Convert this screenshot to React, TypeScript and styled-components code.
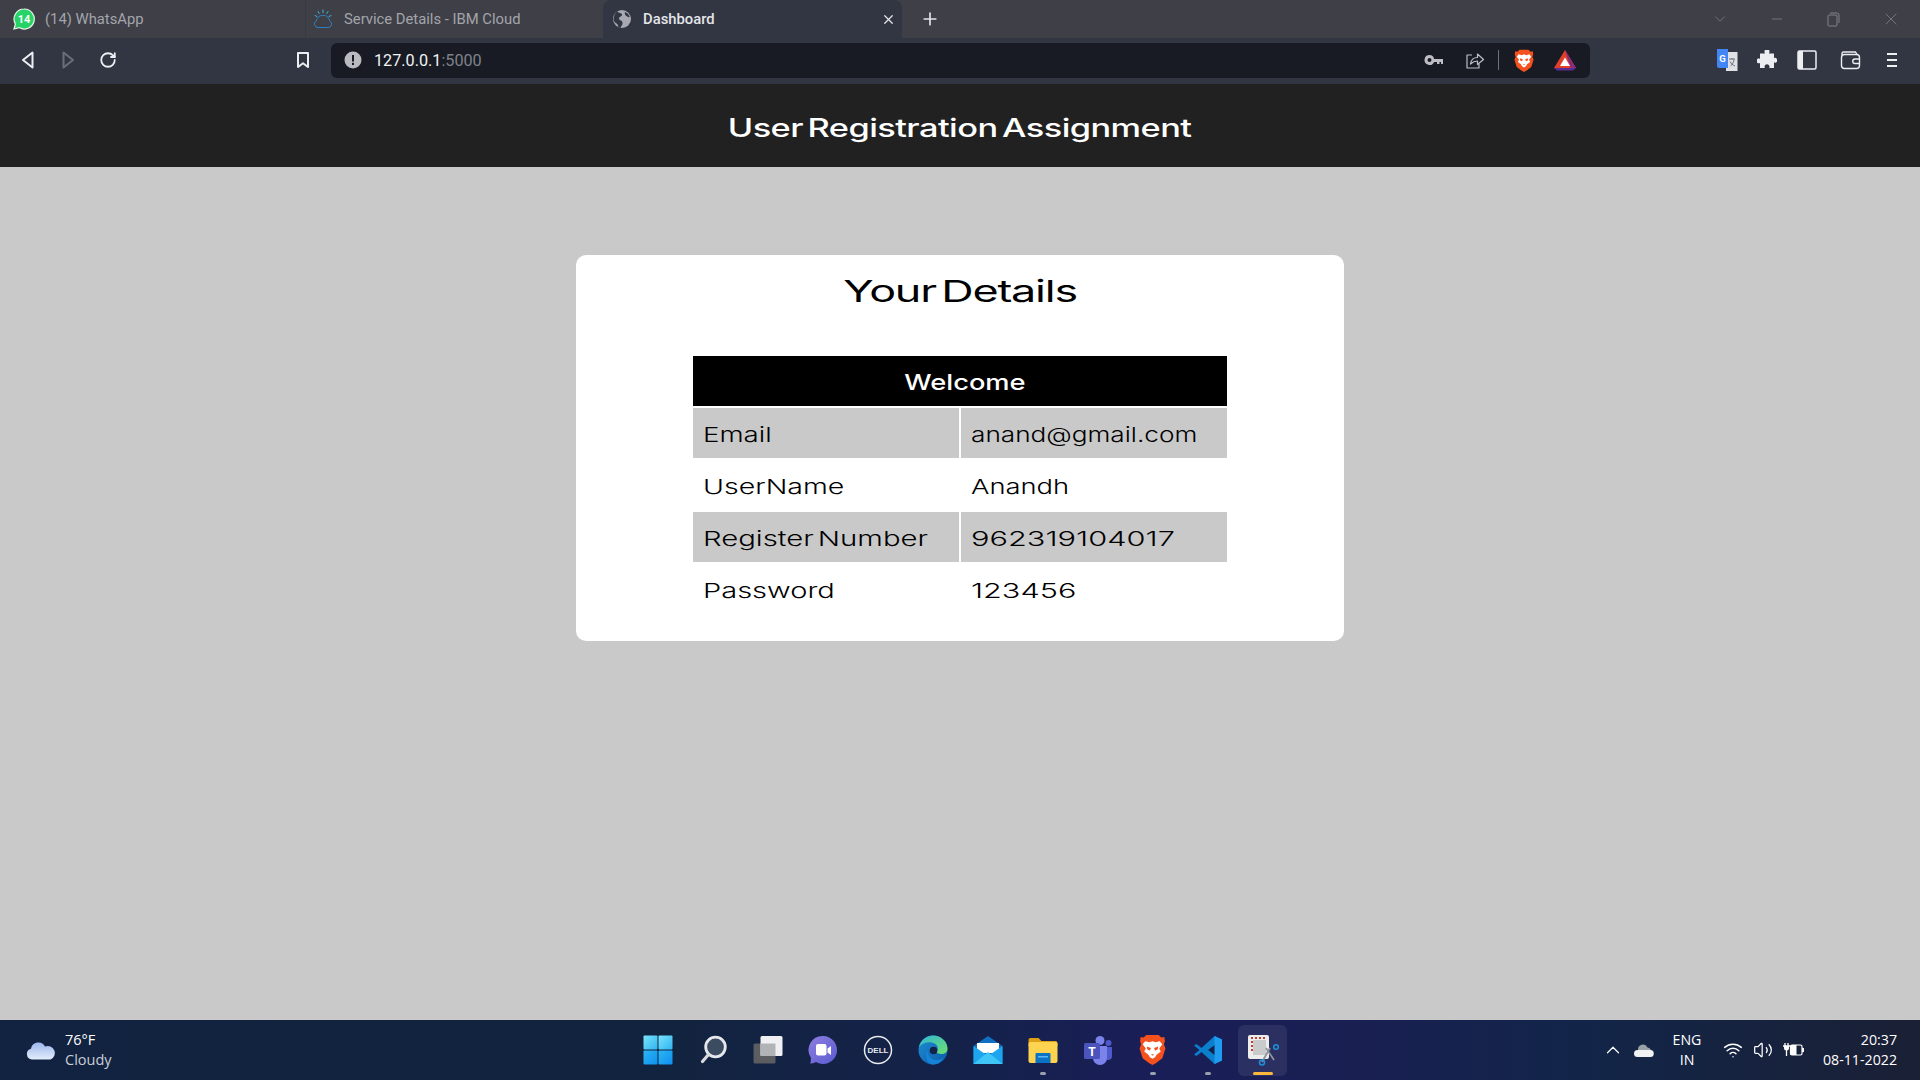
import React from "react"
import styled, { createGlobalStyle } from "styled-components"
import { ChevronDown, ChevronUp, Minus, Plus, RotateCw, Volume2, Wifi, X } from "lucide-react"

const GlobalStyle = createGlobalStyle`
  html, body {
    margin: 0;
    height: 100%;
    overflow: hidden;
  }
  body {
    font-family: "Open Sans", "Liberation Sans", sans-serif;
  }
  * {
    box-sizing: border-box;
  }
`

const Screen = styled.div`
  display: flex;
  flex-direction: column;
  width: 1920px;
  height: 1080px;
  background: #c9c9c9;
`

const TabStrip = styled.div`
  display: flex;
  align-items: stretch;
  height: 38px;
  flex: none;
  background: #3e3f47;
`

const Tab = styled.div<{ $active?: boolean; $pad: number; $width: number; $divider?: boolean }>`
  display: flex;
  align-items: center;
  gap: 10px;
  width: ${p => p.$width}px;
  margin-left: ${p => (p.$divider ? 4 : 0)}px;
  padding: 0 6px 0 ${p => p.$pad}px;
  border-left: ${p => (p.$divider ? "1px solid #383941" : "none")};
  border-radius: ${p => (p.$active ? "8px 8px 0 0" : "0")};
  background: ${p => (p.$active ? "#323643" : "transparent")};
  color: ${p => (p.$active ? "#e4e5e9" : "#a3a5ab")};
  font-family: Roboto, "Liberation Sans", sans-serif;
  font-size: 14.8px;
  font-weight: ${p => (p.$active ? 500 : 400)};
`

const TabTitle = styled.span`
  flex: 1;
  white-space: nowrap;
`

const NewTab = styled.div`
  display: flex;
  align-items: center;
  justify-content: center;
  width: 56px;
  color: #e4e5e9;
`

const WindowControls = styled.div`
  display: flex;
  align-items: center;
  margin-left: auto;
  padding-right: 1px;
  color: #80828a;
`

const WindowButton = styled.div`
  display: flex;
  align-items: center;
  justify-content: center;
  width: 57px;
  height: 38px;
`

const Toolbar = styled.div`
  display: flex;
  align-items: center;
  height: 46px;
  flex: none;
  padding: 0 8px 2px;
  background: #323643;
`

const ToolButton = styled.div<{ $dim?: boolean; $after?: number }>`
  display: flex;
  align-items: center;
  justify-content: center;
  width: 40px;
  height: 36px;
  flex: none;
  margin-right: ${p => p.$after ?? 0}px;
  color: ${p => (p.$dim ? "#6b6e79" : "#eceef2")};
`

const BookmarkButton = styled(ToolButton)`
  margin-left: 155px;
`

const AddressBar = styled.div`
  display: flex;
  align-items: center;
  width: 1259px;
  height: 35px;
  margin-left: 8px;
  padding: 0 5px 0 13px;
  border-radius: 6px;
  background: #181b23;
  font-family: Roboto, "Liberation Sans", sans-serif;
  font-size: 16.2px;
  flex: none;
`

const Host = styled.span`
  margin-left: 12px;
  color: #f2f3f5;
`

const Port = styled.span`
  color: #7f828b;
`

const AddressIcons = styled.div`
  display: flex;
  align-items: center;
  margin-left: auto;
`

const AddressIcon = styled.div`
  display: flex;
  align-items: center;
  justify-content: center;
  width: 41px;
  height: 35px;
  color: #bcbec4;
`

const Separator = styled.div`
  width: 1px;
  height: 20px;
  margin: 0 4px 0 3px;
  background: #6f727a;
`

const ToolRight = styled.div`
  display: flex;
  align-items: center;
  margin-left: auto;
`

const WideButton = styled(ToolButton)`
  width: 41px;
`

const PageHeader = styled.header`
  display: flex;
  align-items: center;
  justify-content: center;
  height: 83px;
  flex: none;
  padding-top: 5px;
  background: #212121;
  color: #fff;
`

const Stretched = styled.span<{ $scale: number }>`
  display: inline-block;
  white-space: nowrap;
  transform: scaleX(${p => p.$scale});
  transform-origin: left center;
`

const CenterStretched = styled(Stretched)`
  transform-origin: center;
`

const HeaderTitle = styled.h1`
  margin: 0;
  font-family: Inter, "Liberation Sans", sans-serif;
  font-size: 25px;
  font-weight: 500;
  line-height: 30px;
  letter-spacing: -0.4px;
  word-spacing: -3px;
`

const Main = styled.main`
  flex: 1;
  display: flex;
  flex-direction: column;
  align-items: center;
  padding-top: 88px;
`

const Card = styled.section`
  width: 768px;
  height: 386px;
  padding-top: 14px;
  border-radius: 10px;
  background: #fff;
`

const CardTitle = styled.h2`
  height: 85px;
  margin: 0;
  font-family: Inter, "Liberation Sans", sans-serif;
  font-size: 30px;
  font-weight: 400;
  line-height: 44px;
  letter-spacing: -0.8px;
  word-spacing: -4px;
  text-align: center;
  color: #000;
`

const DetailTable = styled.table`
  width: 538px;
  margin: 0 auto;
  border-collapse: separate;
  border-spacing: 2px;
  table-layout: fixed;
  font-family: Inter, "Liberation Sans", sans-serif;
  color: #000;
`

const HeadCell = styled.th`
  height: 50px;
  padding: 2px 0 0 10px;
  background: #000;
  color: #fff;
  font-size: 22px;
  font-weight: 500;
  text-align: center;
`

const Row = styled.tr<{ $shaded?: boolean }>`
  background: ${p => (p.$shaded ? "#c9c9c9" : "#fff")};
`

const Cell = styled.td<{ $width?: number }>`
  width: ${p => (p.$width ? `${p.$width}px` : "auto")};
  height: 50px;
  padding: 2px 0 0 10px;
  font-size: 20.5px;
  font-weight: 300;
  word-spacing: -3px;
`

const Taskbar = styled.footer`
  position: relative;
  display: flex;
  align-items: center;
  justify-content: space-between;
  height: 60px;
  flex: none;
  padding: 0 23px 0 26px;
  background: linear-gradient(90deg, #112340 0%, #12233f 35%, #14224a 50%, #1a1e58 60%, #191f52 70%, #122549 82%, #1a2035 100%);
  color: #fff;
`

const Weather = styled.div`
  display: flex;
  align-items: center;
  gap: 9px;
  font-size: 14.5px;
  line-height: 20px;
`

const WeatherText = styled.div`
  display: flex;
  flex-direction: column;
`

const Muted = styled.span`
  color: #c9ced8;
`

const TaskIcons = styled.div`
  position: absolute;
  left: 630px;
  top: 0;
  display: flex;
  height: 60px;
`

const TaskIcon = styled.div<{ $open?: boolean; $active?: boolean }>`
  position: relative;
  display: flex;
  align-items: center;
  justify-content: center;
  width: 55px;
  height: 60px;
  &::before {
    content: "";
    position: absolute;
    left: 3px;
    right: 3px;
    top: 5px;
    bottom: 4px;
    border-radius: 6px;
    background: ${p => (p.$active ? "rgba(255, 255, 255, 0.08)" : "transparent")};
  }
  &::after {
    content: "";
    position: absolute;
    left: 50%;
    bottom: 5px;
    width: ${p => (p.$active ? 20 : 6)}px;
    height: 3px;
    margin-left: ${p => (p.$active ? -10 : -3)}px;
    border-radius: 2px;
    background: ${p => (p.$active ? "#fbb83c" : p.$open ? "#9aa0ad" : "transparent")};
  }
  svg {
    position: relative;
    z-index: 1;
  }
`

const Tray = styled.div`
  display: flex;
  align-items: center;
  font-size: 14.2px;
  line-height: 20px;
`

const TrayIcon = styled.div<{ $width: number }>`
  display: flex;
  align-items: center;
  justify-content: center;
  width: ${p => p.$width}px;
`

const Lang = styled.div`
  width: 44px;
  margin: 0 9px 0 5px;
  text-align: center;
`

const Clock = styled.div`
  width: 89px;
  text-align: right;
`

const WhatsAppIcon = () => (
  <svg width="22" height="22" viewBox="0 0 22 22">
    <path d="M11 1a10 10 0 0 0-8.600 15L1 21l5.200-1.400A10 10 0 1 0 11 1z" fill="#25d366" stroke="#e8f5ea" strokeWidth="1.200" />
    <text x="11" y="15" textAnchor="middle" fontSize="11" fontWeight="700" fontFamily="Roboto, sans-serif" fill="#fff">14</text>
  </svg>
)

const IbmCloudIcon = () => (
  <svg width="22" height="22" viewBox="0 0 22 22" fill="none" strokeLinecap="round">
    <path d="M6 19.500h10a3.500 3.500 0 0 0 1.500-6.700 6.600 6.600 0 0 0-13 0A3.500 3.500 0 0 0 6 19.500z" stroke="#2f7fbf" strokeWidth="1" />
    <path d="M11 2v2.500M6 3.500l1.200 2M16 3.500l-1.200 2M3 7.500l2 1M19 7.500l-2 1" stroke="#3dbcd2" strokeWidth="1" />
  </svg>
)

const GlobeIcon = () => (
  <svg width="22" height="22" viewBox="0 0 22 22">
    <circle cx="11" cy="11" r="9" fill="#a6a9b1" />
    <path d="M6 3.500c2 2 4.500 1 5 3s-3 2-3 4 3 1.500 3.500 4-1.500 3-2 5.500l-2-.5c-.5-2-.5-3-2-4S2.500 13 2.500 11 4 5 6 3.500zM14 4c2 .5 4 2.500 4.800 5-1.500.5-3-.5-4-1.500S13.500 5 14 4z" fill="#323643" />
  </svg>
)

const BackIcon = ({ flip }: { flip?: boolean }) => (
  <svg width="16" height="20" viewBox="0 0 16 20" fill="none" stroke="currentColor" strokeWidth="2" strokeLinejoin="round" style={flip ? { transform: "scaleX(-1)" } : undefined}>
    <path d="M12.500 2.500v15L3 10z" />
  </svg>
)

const BookmarkIcon = () => (
  <svg width="16" height="20" viewBox="0 0 16 20" fill="none" stroke="currentColor" strokeWidth="2" strokeLinejoin="round">
    <path d="M3 3h10v14l-5-3.800L3 17z" />
  </svg>
)

const InfoIcon = () => (
  <svg width="18" height="18" viewBox="0 0 18 18">
    <circle cx="9" cy="9" r="8.500" fill="#b9bbc1" />
    <rect x="8" y="4" width="2" height="6.500" fill="#181b23" />
    <rect x="8" y="11.800" width="2" height="2.200" fill="#181b23" />
  </svg>
)

const KeyIcon = () => (
  <svg width="20" height="14" viewBox="0 0 20 14">
    <path d="M5.500 2a5 5 0 1 0 4.600 7H13v2h2.500V9H17v2h2V6h-8.900A5 5 0 0 0 5.500 2zm0 3a2 2 0 1 1 0 4 2 2 0 0 1 0-4z" fill="currentColor" />
  </svg>
)

const ShareIcon = () => (
  <svg width="20" height="20" viewBox="0 0 20 20" fill="none" stroke="currentColor" strokeWidth="1.200" strokeLinejoin="round">
    <path d="M7 5H2v13h12v-4" />
    <path d="M5.500 14c.5-4 3-6.500 7-6.500V4l6 5.500-6 5V11c-3 0-5 1-7 3z" />
  </svg>
)

const BraveIcon = ({ size }: { size: number }) => (
  <svg width={size} height={size * 1.150} viewBox="0 0 26 30">
    <path d="M7 1h12l2.500 2.500L24.500 3 25 7l-1 3 1.500 4-3 9.500-6 4.500-3.500 2-3.500-2-6-4.500-3-9.500L2 10 1 7l.5-4 3 .5z" fill="#f4511e" />
    <path d="M6 7l4 1 3-1 3 1 4-1 2.500 3-3 4 1.500 3-4 3-1.500 2.500L13 24l-2.500-1.500L9 20l-4-3 1.500-3-3-4z" fill="#fff" />
    <path d="M7.500 12l4 1.500-1 2.500-2.500-1zM18.500 12l-4 1.500 1 2.500 2.500-1zM11.500 19.500h3L13 21z" fill="#f4511e" />
  </svg>
)

const BatIcon = () => (
  <svg width="24" height="22" viewBox="0 0 24 22">
    <path d="M12 1 1 19h22z" fill="#e0402a" />
    <path d="M12 1l11 18h-5.500z" fill="#8a2c7c" />
    <path d="M1 19h22l-3 2.500H4z" fill="#5c2d91" />
    <path d="M12 8.500 7 17h10z" fill="#fff" />
  </svg>
)

const TranslateIcon = () => (
  <svg width="22" height="24" viewBox="0 0 22 24">
    <rect x="10" y="4" width="11.500" height="19" fill="#dfe1e5" />
    <path d="M13 11h6M16 10v1.500M14.500 18c2-1.500 3-3.500 3.500-6.500M14 13.500c1 2 2.500 3.500 5 4.500" stroke="#6b6e79" strokeWidth="1" fill="none" />
    <path d="M1 1h11v19H3a2 2 0 0 1-2-2z" fill="#4285f4" />
    <text x="6.500" y="14" textAnchor="middle" fontSize="9.500" fontWeight="700" fontFamily="Roboto, sans-serif" fill="#fff">G</text>
  </svg>
)

const PuzzleIcon = () => (
  <svg width="20" height="20" viewBox="0 0 20 20">
    <path d="M7.500 1.500a2.500 2.500 0 0 1 5 0c0 .8-.3 1.300-.5 1.900H17v4.800c.7-.4 1.200-.6 1.800-.3a2.600 2.600 0 0 1-.1 4.800c-.6.200-1.100 0-1.700-.4V18h-4.800c.3-.7.500-1.300.2-2a2.500 2.500 0 0 0-4.800.1c-.2.700 0 1.300.4 1.900H3v-5c-.6.300-1.200.5-1.800.2a2.500 2.500 0 0 1 .1-4.800c.6-.1 1.200.1 1.700.5V3.400h4.900c-.3-.6-.4-1.100-.4-1.900z" fill="#eceef2" />
  </svg>
)

const SidebarIcon = () => (
  <svg width="20" height="20" viewBox="0 0 20 20">
    <rect x="1" y="1" width="18" height="18" rx="1.500" fill="none" stroke="#eceef2" strokeWidth="1.500" />
    <rect x="1" y="1" width="5" height="18" fill="#eceef2" />
  </svg>
)

const WalletIcon = () => (
  <svg width="21" height="20" viewBox="0 0 21 20" fill="none" stroke="#eceef2" strokeWidth="1.400">
    <path d="M2 5V3.500A1.500 1.500 0 0 1 3.500 2h12L17 4.500" />
    <rect x="1.500" y="4.500" width="18" height="14" rx="3" />
    <path d="M19.500 9H15a2.200 2.200 0 0 0 0 4.500h4.500" />
  </svg>
)

const MenuIcon = () => (
  <svg width="14" height="16" viewBox="0 0 14 16" stroke="#eceef2" strokeWidth="1.800">
    <path d="M2 2h10M2 8h10M2 14h10" />
  </svg>
)

const RestoreIcon = () => (
  <svg width="13" height="15" viewBox="0 0 13 15" fill="none" stroke="currentColor" strokeWidth="1">
    <rect x="1" y="3" width="9" height="11" rx="1" />
    <path d="M3 1h7a2 2 0 0 1 2 2v8" />
  </svg>
)

const WeatherCloud = () => (
  <svg width="30" height="20" viewBox="0 0 30 20">
    <defs>
      <linearGradient id="weatherGrad" x1="0" y1="0" x2="0" y2="1">
        <stop offset="0" stopColor="#9bb8ee" />
        <stop offset="1" stopColor="#e3ecfb" />
      </linearGradient>
    </defs>
    <path d="M6 19.500a5.500 5.500 0 0 1-1-10.800A7.500 7.500 0 0 1 19 6.500a6.500 6.500 0 0 1 5.500 13z" fill="url(#weatherGrad)" />
  </svg>
)

const WindowsLogo = () => (
  <svg width="30" height="30" viewBox="0 0 30 30">
    <defs>
      <linearGradient id="winTop" x1="0" y1="0" x2="1" y2="1">
        <stop offset="0" stopColor="#7be3fb" />
        <stop offset="1" stopColor="#2fb4f0" />
      </linearGradient>
      <linearGradient id="winBottom" x1="0" y1="0" x2="1" y2="1">
        <stop offset="0" stopColor="#2cb6f2" />
        <stop offset="1" stopColor="#0f8ff0" />
      </linearGradient>
    </defs>
    <rect x="0.500" y="0.500" width="14" height="14" rx="1" fill="url(#winTop)" />
    <rect x="15.500" y="0.500" width="14" height="14" rx="1" fill="url(#winTop)" />
    <rect x="0.500" y="15.500" width="14" height="14" rx="1" fill="url(#winBottom)" />
    <rect x="15.500" y="15.500" width="14" height="14" rx="1" fill="url(#winBottom)" />
  </svg>
)

const SearchIcon = () => (
  <svg width="30" height="30" viewBox="0 0 30 30">
    <circle cx="17.500" cy="12" r="9.800" fill="#3b4b60" stroke="#e6e8ec" strokeWidth="2.800" />
    <path d="M10.500 19.500 4.500 26.500" stroke="#d8dadf" strokeWidth="3.200" strokeLinecap="round" />
  </svg>
)

const TaskViewIcon = () => (
  <svg width="30" height="30" viewBox="0 0 30 30">
    <rect x="0.500" y="8.500" width="22" height="20" rx="1.500" fill="#5b5d61" />
    <rect x="7.500" y="1" width="22" height="20" rx="1.500" fill="#f0f0f2" />
    <rect x="7.500" y="8.500" width="15" height="12.500" fill="#b2b3b7" />
  </svg>
)

const ChatIcon = () => (
  <svg width="30" height="30" viewBox="0 0 30 30">
    <defs>
      <linearGradient id="chatGrad" x1="0" y1="0" x2="1" y2="1">
        <stop offset="0" stopColor="#8d7ee0" />
        <stop offset="1" stopColor="#5b5bd0" />
      </linearGradient>
    </defs>
    <path d="M15 1a14 14 0 1 1-7 26.100c-2 1-4 1.500-6 1.500.8-1.500 1-3 .8-6A14 14 0 0 1 15 1z" fill="url(#chatGrad)" />
    <rect x="8" y="9" width="10.500" height="11.500" rx="2" fill="#fff" />
    <path d="M19.500 13.500 23 11v9l-3.500-2.500z" fill="#fff" />
  </svg>
)

const DellIcon = () => (
  <svg width="30" height="30" viewBox="0 0 30 30">
    <circle cx="15" cy="15" r="13.500" fill="none" stroke="#e8eaee" strokeWidth="1.500" />
    <text x="15" y="18" textAnchor="middle" fontSize="8" fontWeight="700" fontFamily="Liberation Sans, sans-serif" fill="#e8eaee">DELL</text>
  </svg>
)

const EdgeIcon = () => (
  <svg width="30" height="30" viewBox="0 0 30 30">
    <defs>
      <linearGradient id="edgeGreen" x1="0" y1="0" x2="1" y2="1">
        <stop offset="0" stopColor="#2fb5d8" />
        <stop offset="1" stopColor="#6fe06c" />
      </linearGradient>
      <linearGradient id="edgeBlue" x1="0" y1="0" x2="1" y2="1">
        <stop offset="0" stopColor="#1e8fd6" />
        <stop offset="1" stopColor="#0b5aa6" />
      </linearGradient>
    </defs>
    <circle cx="15" cy="15" r="14.500" fill="url(#edgeBlue)" />
    <path d="M1 12C3 4.500 9 .5 15 .5c8 0 14.500 6 14.500 13 0 4-3 5.500-6 5.500-3 0-5-1-5-2.500 2-1 2-5-1-7.500C13 6 5 6.500 1 12z" fill="url(#edgeGreen)" />
    <path d="M10 17c0 5 4 8 9 8 3 0 5-1 7-3-2 4.500-6 7.500-11 7.500C11 29.500 8 25 8 20c0-2 1-4 2-3z" fill="#1683d8" />
    <circle cx="15.500" cy="15.500" r="3.800" fill="#14224a" />
  </svg>
)

const MailIcon = () => (
  <svg width="30" height="30" viewBox="0 0 30 30">
    <path d="M15 1 0.500 11v18h29V11z" fill="#0f6fc0" />
    <path d="M4 8h22v10H4z" fill="#fff" />
    <path d="M0.500 11 15 21l14.500-10v18h-29z" fill="#1ea5ef" />
    <path d="M0.500 29 15 17l14.500 12z" fill="#3fc6f7" />
  </svg>
)

const FolderIcon = () => (
  <svg width="30" height="30" viewBox="0 0 30 30">
    <path d="M0.500 5a2 2 0 0 1 2-2h8l3 3h14a2 2 0 0 1 2 2v3h-29z" fill="#e0a114" />
    <rect x="0.500" y="7" width="29" height="21" rx="2" fill="#fdd34f" />
    <path d="M7.500 19a1 1 0 0 1 1-1h13a1 1 0 0 1 1 1v9h-15z" fill="#0b72c4" />
    <rect x="10" y="21" width="10" height="1.500" fill="#5cb9f1" />
  </svg>
)

const TeamsIcon = () => (
  <svg width="30" height="30" viewBox="0 0 30 30">
    <circle cx="17" cy="5.500" r="4.500" fill="#7b83eb" />
    <circle cx="25.500" cy="8" r="3" fill="#5059c9" />
    <path d="M21 12h8v9a4 4 0 0 1-8 0z" fill="#5059c9" />
    <path d="M10 11h14v12a7 7 0 0 1-14 0z" fill="#7b83eb" />
    <rect x="1" y="8" width="16" height="16" rx="1.500" fill="#4b53bc" />
    <text x="9" y="20.500" textAnchor="middle" fontSize="12" fontWeight="700" fontFamily="Roboto, sans-serif" fill="#fff">T</text>
  </svg>
)

const VsCodeIcon = () => (
  <svg width="30" height="30" viewBox="0 0 30 30">
    <path d="M21.500 1 29 4.500v21L21.500 29 8.500 17l-5 4L1 19.500l5.500-4.500L1 10.500 3.500 9l5 4z" fill="#0a7fcc" />
    <path d="M21.500 1 29 4.500v21L21.500 29V20l-6.500-5 6.500-5z" fill="#1f9cf0" />
    <path d="M21.500 10v10L15 15z" fill="#14224a" />
  </svg>
)

const SnipIcon = () => (
  <svg width="32" height="32" viewBox="0 0 32 32">
    <rect x="1" y="1" width="21" height="24" rx="2" fill="#eceded" />
    <rect x="6" y="6" width="13" height="15" fill="#c9cacc" />
    <path d="M4 3h2v2H4zM4 7h2v2H4zM4 11h2v2H4zM4 15h2v2H4zM8 3h2v2H8zM12 3h2v2h-2zM16 3h2v2h-2z" fill="#c73b2f" />
    <path d="M15 28 23 14M27 26 19 14" stroke="#8f9399" strokeWidth="1.800" />
    <circle cx="15" cy="28.500" r="2.500" fill="none" stroke="#1b8fd8" strokeWidth="1.600" />
    <circle cx="29" cy="13" r="2.300" fill="none" stroke="#1b8fd8" strokeWidth="1.600" />
  </svg>
)

const OneDriveIcon = () => (
  <svg width="22" height="14" viewBox="0 0 22 14">
    <path d="M5 7a5 5 0 0 1 9.500-2.500A4 4 0 0 1 18 7z" fill="#9aa0a8" />
    <path d="M4.500 14a3.500 3.500 0 0 1 0-7H17a3.500 3.500 0 0 1 .5 7z" fill="#f0f1f3" />
  </svg>
)

const BatteryIcon = () => (
  <svg width="22" height="18" viewBox="0 0 22 18">
    <path d="M1 5h7M3 2v3M6 2v3M4.500 9v6" stroke="#fff" strokeWidth="1.300" fill="none" />
    <path d="M2 5v2a2.500 2.500 0 0 0 5 0V5z" fill="#fff" />
    <rect x="8.500" y="4" width="11.500" height="10" rx="1.500" fill="none" stroke="#fff" strokeWidth="1.200" />
    <rect x="8.500" y="4" width="6" height="10" fill="#fff" />
    <rect x="20" y="7" width="2" height="4" fill="#fff" />
  </svg>
)

// widths differ row by row, the real page font is much wider on digits than on letters
const rows = [
  { label: "Email", value: "anand@gmail.com", labelScale: 1.35, valueScale: 1.277 },
  { label: "UserName", value: "Anandh", labelScale: 1.39, valueScale: 1.334 },
  { label: "Register Number", value: "962319104017", labelScale: 1.43, valueScale: 1.5 },
  { label: "Password", value: "123456", labelScale: 1.415, valueScale: 1.495 },
]

const App = () => {
  return (
    <Screen>
      <GlobalStyle />
      <TabStrip>
        <Tab $pad={13} $width={301}>
          <WhatsAppIcon />
          <TabTitle>(14) WhatsApp</TabTitle>
        </Tab>
        <Tab $pad={6} $width={298} $divider>
          <IbmCloudIcon />
          <TabTitle>Service Details - IBM Cloud</TabTitle>
        </Tab>
        <Tab $pad={8} $width={299} $active>
          <GlobeIcon />
          <TabTitle>Dashboard</TabTitle>
          <X size={15} color="#e4e5e9" />
        </Tab>
        <NewTab>
          <Plus size={20} strokeWidth={2} />
        </NewTab>
        <WindowControls>
          <WindowButton><ChevronDown size={18} strokeWidth={1} /></WindowButton>
          <WindowButton><Minus size={16} strokeWidth={1.200} /></WindowButton>
          <WindowButton><RestoreIcon /></WindowButton>
          <WindowButton><X size={20} strokeWidth={1} /></WindowButton>
        </WindowControls>
      </TabStrip>

      <Toolbar>
        <ToolButton><BackIcon /></ToolButton>
        <ToolButton $dim><BackIcon flip /></ToolButton>
        <ToolButton><RotateCw size={18} strokeWidth={2.400} /></ToolButton>
        <BookmarkButton><BookmarkIcon /></BookmarkButton>
        <AddressBar>
          <InfoIcon />
          <Host>127.0.0.1<Port>:5000</Port></Host>
          <AddressIcons>
            <AddressIcon><KeyIcon /></AddressIcon>
            <AddressIcon><ShareIcon /></AddressIcon>
            <Separator />
            <AddressIcon><BraveIcon size={20} /></AddressIcon>
            <AddressIcon><BatIcon /></AddressIcon>
          </AddressIcons>
        </AddressBar>
        <ToolRight>
          <ToolButton><TranslateIcon /></ToolButton>
          <ToolButton><PuzzleIcon /></ToolButton>
          <ToolButton $after={3}><SidebarIcon /></ToolButton>
          <WideButton><WalletIcon /></WideButton>
          <WideButton><MenuIcon /></WideButton>
        </ToolRight>
      </Toolbar>

      <PageHeader>
        <HeaderTitle><CenterStretched $scale={1.375}>User Registration Assignment</CenterStretched></HeaderTitle>
      </PageHeader>

      <Main>
        <Card>
          <CardTitle><CenterStretched $scale={1.495}>Your Details</CenterStretched></CardTitle>
          <DetailTable>
            <thead>
              <tr>
                <HeadCell colSpan={2}><CenterStretched $scale={1.240}>Welcome</CenterStretched></HeadCell>
              </tr>
            </thead>
            <tbody>
              {rows.map((row, i) => (
                <Row key={row.label} $shaded={i % 2 === 0}>
                  <Cell $width={263}><Stretched $scale={row.labelScale}>{row.label}</Stretched></Cell>
                  <Cell><Stretched $scale={row.valueScale}>{row.value}</Stretched></Cell>
                </Row>
              ))}
            </tbody>
          </DetailTable>
        </Card>
      </Main>

      <Taskbar>
        <Weather>
          <WeatherCloud />
          <WeatherText>
            <span>76°F</span>
            <Muted>Cloudy</Muted>
          </WeatherText>
        </Weather>
        <TaskIcons>
          <TaskIcon><WindowsLogo /></TaskIcon>
          <TaskIcon><SearchIcon /></TaskIcon>
          <TaskIcon><TaskViewIcon /></TaskIcon>
          <TaskIcon><ChatIcon /></TaskIcon>
          <TaskIcon><DellIcon /></TaskIcon>
          <TaskIcon><EdgeIcon /></TaskIcon>
          <TaskIcon><MailIcon /></TaskIcon>
          <TaskIcon $open><FolderIcon /></TaskIcon>
          <TaskIcon><TeamsIcon /></TaskIcon>
          <TaskIcon $open><BraveIcon size={27} /></TaskIcon>
          <TaskIcon $open><VsCodeIcon /></TaskIcon>
          <TaskIcon $active><SnipIcon /></TaskIcon>
        </TaskIcons>
        <Tray>
          <TrayIcon $width={30}><ChevronUp size={22} strokeWidth={1.300} /></TrayIcon>
          <TrayIcon $width={32}><OneDriveIcon /></TrayIcon>
          <Lang>ENG<br />IN</Lang>
          <TrayIcon $width={30}><Wifi size={20} strokeWidth={1.800} /></TrayIcon>
          <TrayIcon $width={30}><Volume2 size={20} strokeWidth={1.500} /></TrayIcon>
          <TrayIcon $width={30}><BatteryIcon /></TrayIcon>
          <Clock>20:37<br />08-11-2022</Clock>
        </Tray>
      </Taskbar>
    </Screen>
  )
}

export default App
